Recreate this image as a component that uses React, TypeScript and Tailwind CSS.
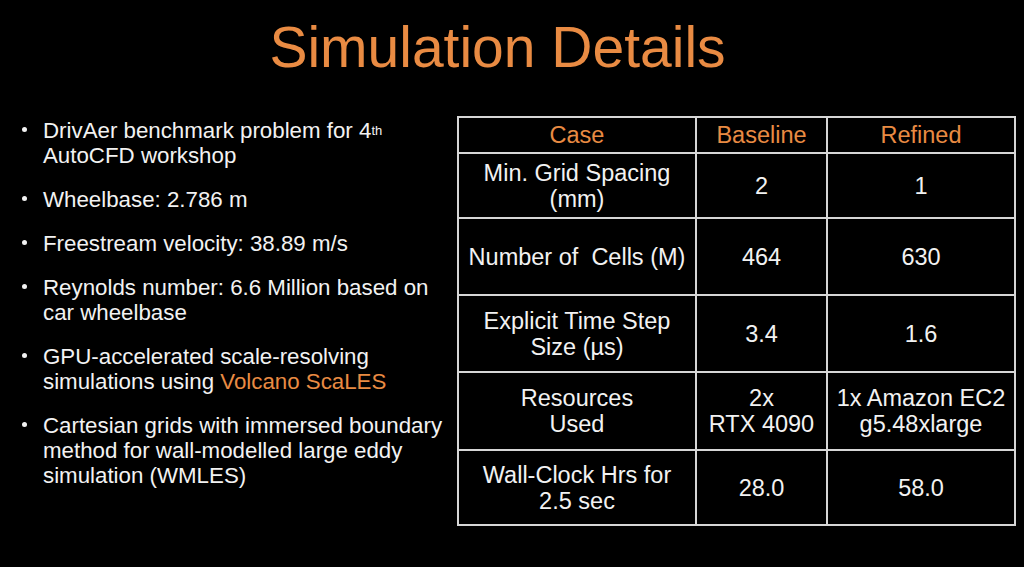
import type { FC, ReactNode } from 'react';

const bullets: ReactNode[] = [
  <>DrivAer benchmark problem for 4<sup className="text-[13px] relative -top-[3px]">th</sup> AutoCFD workshop</>,
  <>Wheelbase: 2.786 m</>,
  <>Freestream velocity: 38.89 m/s</>,
  <>Reynolds number: 6.6 Million based on car wheelbase</>,
  <>GPU-accelerated scale-resolving simulations using <span className="text-[#e98b43]">Volcano ScaLES</span></>,
  <>Cartesian grids with immersed boundary method for wall-modelled large eddy simulation (WMLES)</>,
];

const rows: ReactNode[][] = [
  [<>Min. Grid Spacing<br />(mm)</>, '2', '1'],
  ['Number of\u00a0 Cells (M)', '464', '630'],
  [<>Explicit Time Step<br />Size (µs)</>, '3.4', '1.6'],
  [<>Resources<br />Used</>, <>2x<br />RTX 4090</>, <>1x Amazon EC2<br />g5.48xlarge</>],
  [<>Wall-Clock Hrs for<br />2.5 sec</>, '28.0', '58.0'],
];

const Cell: FC<{ children: ReactNode; head?: boolean }> = ({ children, head }) => (
  <div
    className={
      'bg-black flex items-center justify-center text-center ' +
      (head ? 'text-[#e98b43]' : 'text-[#f2f2f2]')
    }
  >
    <div>{children}</div>
  </div>
);

export default function App() {
  return (
    <div
      className="w-[1024px] h-[567px] bg-black overflow-hidden"
      style={{ fontFamily: '"Liberation Sans", Arial, sans-serif' }}
    >
      <div className="h-[116px] pt-[16px]">
        <h1 className="w-[995px] text-center text-[57px] leading-[62px] text-[#e98b43]">
          Simulation Details
        </h1>
      </div>

      <div className="flex">
        <ul className="w-[457px] pt-[2px] pl-[22px] pr-[6px] flex flex-col gap-[19px] text-[22.3px] leading-[25px] text-[#f2f2f2]">
          {bullets.map((b, i) => (
            <li key={i} className="flex">
              <span className="mt-[9px] w-[5px] h-[5px] rounded-full bg-[#f2f2f2] shrink-0" />
              <span className="ml-[16px]">{b}</span>
            </li>
          ))}
        </ul>

        <div className="bg-[#d6d6d6] p-[2px] grid grid-cols-[236px_129px_186px] grid-rows-[34px_63px_75px_75px_76px_73px] gap-[2px] text-[23.5px] leading-[26px] h-fit">
          <Cell head>Case</Cell>
          <Cell head>Baseline</Cell>
          <Cell head>Refined</Cell>
          {rows.map((r, i) =>
            r.map((c, j) => <Cell key={i + '-' + j}>{c}</Cell>)
          )}
        </div>
      </div>
    </div>
  );
}
